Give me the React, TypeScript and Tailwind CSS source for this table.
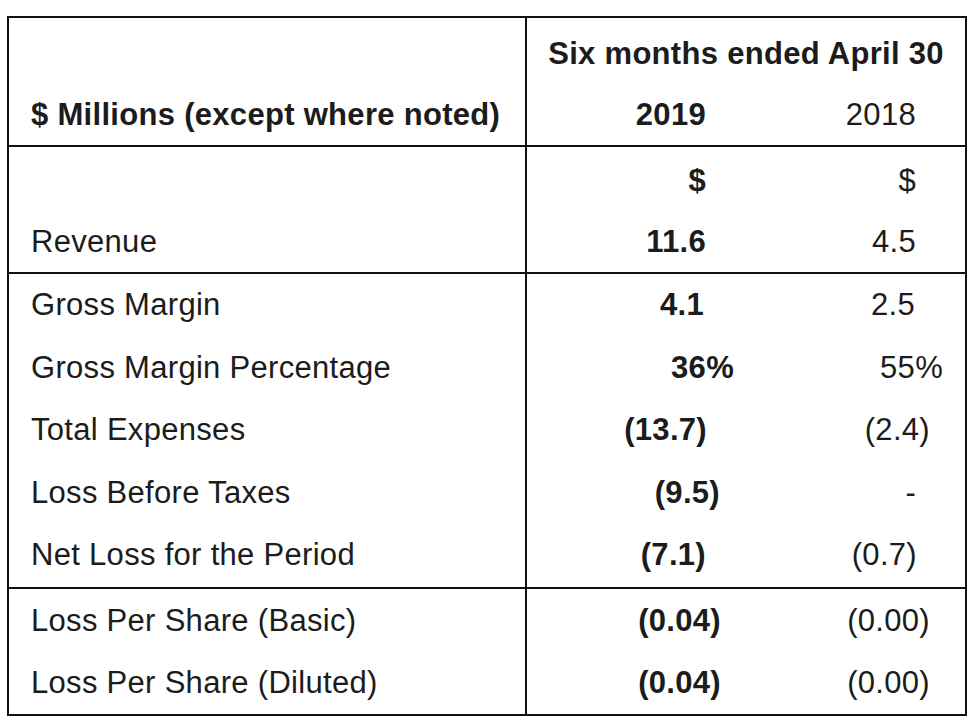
type Val = { text: string; bold?: boolean; pr: string };

type Row = { label: string; a: Val; b: Val };

const sections: { pad: string; lh: string; rows: Row[] }[] = [
  {
    pad: "pt-[3px]",
    lh: "leading-[61px]",
    rows: [
      { label: "", a: { text: "$", bold: true, pr: "pr-[40px]" }, b: { text: "$", pr: "pr-[49px]" } },
      { label: "Revenue", a: { text: "11.6", bold: true, pr: "pr-[40px]" }, b: { text: "4.5", pr: "pr-[49px]" } },
    ],
  },
  {
    pad: "pt-0",
    lh: "leading-[62.6px]",
    rows: [
      { label: "Gross Margin", a: { text: "4.1", bold: true, pr: "pr-[42px]" }, b: { text: "2.5", pr: "pr-[50px]" } },
      { label: "Gross Margin Percentage", a: { text: "36%", bold: true, pr: "pr-[12px]" }, b: { text: "55%", pr: "pr-[22px]" } },
      { label: "Total Expenses", a: { text: "(13.7)", bold: true, pr: "pr-[39px]" }, b: { text: "(2.4)", pr: "pr-[35px]" } },
      { label: "Loss Before Taxes", a: { text: "(9.5)", bold: true, pr: "pr-[26px]" }, b: { text: "-", pr: "pr-[49px]" } },
      { label: "Net Loss for the Period", a: { text: "(7.1)", bold: true, pr: "pr-[40px]" }, b: { text: "(0.7)", pr: "pr-[48px]" } },
    ],
  },
  {
    pad: "pt-[1px]",
    lh: "leading-[62px]",
    rows: [
      { label: "Loss Per Share (Basic)", a: { text: "(0.04)", bold: true, pr: "pr-[25px]" }, b: { text: "(0.00)", pr: "pr-[35px]" } },
      { label: "Loss Per Share (Diluted)", a: { text: "(0.04)", bold: true, pr: "pr-[25px]" }, b: { text: "(0.00)", pr: "pr-[35px]" } },
    ],
  },
];

export default function App() {
  return (
    <div
      className="w-[980px] h-[725px] bg-white text-[#1c1c1c] text-[31px] tracking-[0.3px] pt-[16px] pl-[7px]"
      style={{ fontFamily: '"Liberation Sans", Arial, sans-serif' }}
    >
      <div className="w-[960px] border-2 border-[#111]">
        {/* header */}
        <div className="grid grid-cols-[516px_1fr]">
          <div className="pt-[5px] pl-[22px] leading-[61px]">
            <div className="h-[61px]" />
            <div className="font-bold whitespace-nowrap">$ Millions (except where noted)</div>
          </div>
          <div className="border-l-2 border-[#111] pt-[5px] leading-[61px]">
            <div className="font-bold text-center whitespace-nowrap">Six months ended April 30</div>
            <div className="grid grid-cols-[219px_1fr]">
              <div className="text-right font-bold pr-[40px]">2019</div>
              <div className="text-right pr-[49px]">2018</div>
            </div>
          </div>
        </div>

        {sections.map((s, i) => (
          <div key={i} className="grid grid-cols-[516px_1fr] border-t-2 border-[#111]">
            <div className={`${s.pad} ${s.lh} pl-[22px]`}>
              {s.rows.map((r, j) => (
                <div key={j} className="whitespace-nowrap">
                  {r.label || "\u00a0"}
                </div>
              ))}
            </div>
            <div className={`${s.pad} ${s.lh} border-l-2 border-[#111]`}>
              {s.rows.map((r, j) => (
                <div key={j} className="grid grid-cols-[219px_1fr]">
                  <div className={`text-right ${r.a.pr} ${r.a.bold ? "font-bold" : ""}`}>{r.a.text}</div>
                  <div className={`text-right ${r.b.pr} ${r.b.bold ? "font-bold" : ""}`}>{r.b.text}</div>
                </div>
              ))}
            </div>
          </div>
        ))}
      </div>
    </div>
  );
}
